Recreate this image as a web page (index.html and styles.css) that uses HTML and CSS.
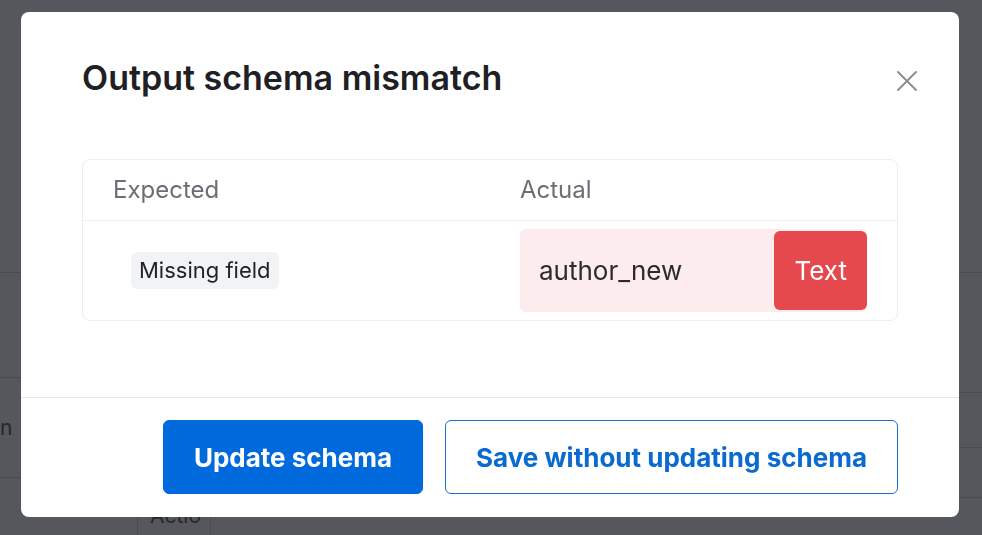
FILE: index.html
```html
<!DOCTYPE html>
<html lang="en">
<head>
<meta charset="utf-8">
<title>Output schema mismatch</title>
<link rel="stylesheet" href="styles.css">
</head>
<body>
<div class="page">
  <div class="page-left">
    <div class="bg-row bg-r1"></div>
    <div class="bg-row bg-r2"></div>
    <div class="bg-row bg-r3"><span class="bg-text">n</span></div>
    <div class="bg-row bg-r4">
      <div class="bg-cell bg-cell-a"></div>
      <div class="bg-cell bg-cell-b"><span class="bg-text">Actio</span></div>
    </div>
  </div>
  <div class="page-right">
    <div class="bg-row bg-q1"></div>
    <div class="bg-row bg-q2"></div>
    <div class="bg-row bg-q3"></div>
    <div class="bg-row bg-q4"></div>
    <div class="bg-row bg-q5"></div>
  </div>
</div>

<div class="overlay">
  <div class="modal" role="dialog" aria-labelledby="modal-title">
    <div class="modal-header">
      <h2 class="modal-title" id="modal-title">Output schema mismatch</h2>
      <button class="close-btn" aria-label="Close">
        <svg width="20" height="20" viewBox="0 0 20 20"><path d="M1 1 L19 19 M19 1 L1 19" stroke="#8b8b8b" stroke-width="1.8" fill="none" stroke-linecap="round"/></svg>
      </button>
    </div>
    <div class="modal-body">
      <div class="schema-table">
        <div class="schema-head">
          <div class="schema-col">Expected</div>
          <div class="schema-col">Actual</div>
        </div>
        <div class="schema-row">
          <div class="schema-col">
            <span class="tag">Missing field</span>
          </div>
          <div class="schema-col">
            <div class="actual-box">
              <span class="field-name">author_new</span>
              <span class="type-badge">Text</span>
            </div>
          </div>
        </div>
      </div>
    </div>
    <div class="modal-footer">
      <button class="btn btn-primary">Update schema</button>
      <button class="btn btn-outline">Save without updating schema</button>
    </div>
  </div>
</div>
</body>
</html>
```

FILE: styles.css
```css
* { box-sizing: border-box; }

html, body {
  margin: 0;
  padding: 0;
  height: 100%;
  overflow: hidden;
}

body {
  font-family: Inter, "Noto Sans", "Liberation Sans", sans-serif;
  background: #54565c;
}

/* dimmed page behind the dialog */
.page {
  display: flex;
  height: 535px;
  background: #55575d;
}

.page-left {
  width: 491px;
  display: flex;
  flex-direction: column;
}

.page-right {
  flex: 1;
  display: flex;
  flex-direction: column;
}

.bg-row {
  border-bottom: 1px solid #4a4c51;
  display: flex;
  align-items: center;
}

.bg-r1 { height: 273px; }
.bg-r2 { height: 105px; }
.bg-r3 { height: 100px; }
.bg-r4 { flex: 1; border-bottom: none; align-items: stretch; }

.bg-q1 { height: 273px; }
.bg-q2 { height: 120px; }
.bg-q3 { height: 55px; }
.bg-q4 { height: 50px; }
.bg-q5 { flex: 1; border-bottom: none; }

.bg-cell { height: 100%; }
.bg-cell-a { width: 138px; border-right: 1px solid #4a4c51; }
.bg-cell-b {
  width: 73px;
  border-right: 1px solid #4a4c51;
  padding: 25px 0 0 12px;
  white-space: nowrap;
}

.bg-text {
  color: #25272b;
  font-size: 21px;
  line-height: 25px;
}

/* overlay + dialog */
.overlay {
  position: fixed;
  inset: 0;
  padding: 12px 23px 18px 21px;
  display: flex;
}

.modal {
  flex: 1;
  background: #ffffff;
  border-radius: 8px;
  display: flex;
  flex-direction: column;
}

.modal-header {
  display: flex;
  align-items: center;
  justify-content: space-between;
  padding: 46px 42px 0 61px;
}

.modal-title {
  margin: 0;
  font-size: 34px;
  line-height: 40px;
  font-weight: 600;
  color: #1f2023;
}

.close-btn {
  border: none;
  background: none;
  padding: 0;
  width: 20px;
  height: 20px;
  margin-top: 6px;
  display: flex;
}

.modal-body {
  flex: 1;
  padding: 61px 61px 0 61px;
}

.schema-table {
  border: 1px solid #ececec;
  border-radius: 8px;
}

.schema-head,
.schema-row {
  display: grid;
  grid-template-columns: 1fr 1fr;
}

.schema-head {
  height: 61px;
  border-bottom: 1px solid #efefef;
  align-items: center;
  color: #6b6e74;
  font-size: 24px;
  padding-bottom: 1px;
}

.schema-col {
  padding: 0 30px;
}

.schema-row {
  align-items: center;
  padding: 8px 0;
}

.tag {
  display: inline-block;
  margin-left: 18px;
  background: #f2f3f5;
  border-radius: 6px;
  padding: 5px 8px;
  font-size: 22px;
  line-height: 27px;
  color: #222326;
}

.actual-box {
  display: flex;
  align-items: center;
  justify-content: space-between;
  height: 83px;
  padding: 2px 0 2px 19px;
  background: #fdeced;
  border-radius: 6px;
}

.field-name {
  font-size: 26px;
  color: #2b2b2e;
}

.type-badge {
  height: 100%;
  display: flex;
  align-items: center;
  padding: 0 20px;
  background: #e5484d;
  border-radius: 6px;
  color: #ffffff;
  font-size: 26px;
}

.modal-footer {
  border-top: 1px solid #e6e6e6;
  padding: 22px 61px 23px;
  display: flex;
  justify-content: flex-end;
  gap: 22px;
}

.btn {
  height: 74px;
  padding: 0 30px;
  border-radius: 6px;
  font-family: inherit;
  font-size: 26px;
  font-weight: 700;
  cursor: pointer;
}

.btn-primary {
  background: #006adc;
  border: 1px solid #006adc;
  color: #ffffff;
}

.btn-outline {
  background: #ffffff;
  border: 1px solid #1a6fc9;
  color: #0b6ad0;
}
```
